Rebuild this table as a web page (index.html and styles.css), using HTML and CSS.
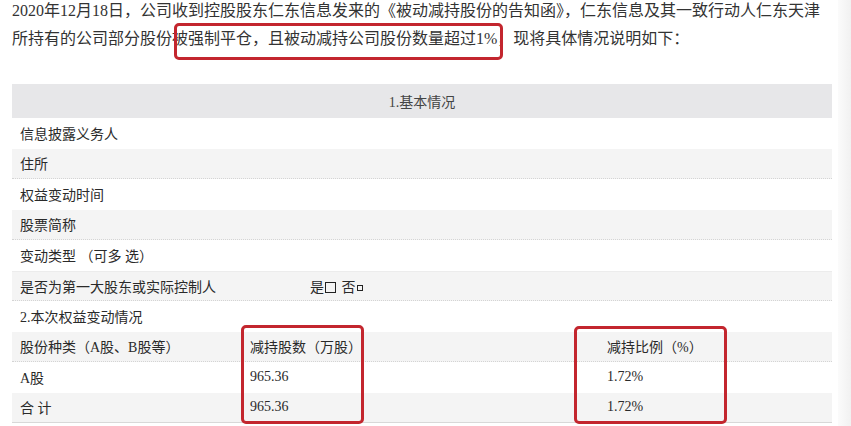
FILE: index.html
```html
<!DOCTYPE html>
<html lang="zh">
<head>
<meta charset="utf-8">
<link rel="stylesheet" href="styles.css">
</head>
<body>
<div class="page">
  <main class="content">
    <p class="intro">2020年12月18日，公司收到控股股东仁东信息发来的《被动减持股份的告知函》，仁东信息及其一致行动人仁东天津所持有的公司部分股份被强制平仓，且被动减持公司股份数量超过1%，现将具体情况说明如下：</p>
    <div class="table">
      <div class="row head"><span class="title">1.基本情况</span></div>
      <div class="row"><span class="cell">信息披露义务人</span></div>
      <div class="row"><span class="cell">住所</span></div>
      <div class="row"><span class="cell">权益变动时间</span></div>
      <div class="row"><span class="cell">股票简称</span></div>
      <div class="row"><span class="cell">变动类型 （可多 选）</span></div>
      <div class="row two"><span class="cell">是否为第一大股东或实际控制人</span><span class="cell">是<i class="box big"></i> 否<i class="box small"></i></span></div>
      <div class="row"><span class="cell">2.本次权益变动情况</span></div>
      <div class="row three"><span class="cell">股份种类（A股、B股等）</span><span class="cell">减持股数（万股）</span><span class="cell">减持比例（%）</span></div>
      <div class="row three"><span class="cell">A股</span><span class="cell">965.36</span><span class="cell">1.72%</span></div>
      <div class="row three last"><span class="cell">合 计</span><span class="cell">965.36</span><span class="cell">1.72%</span></div>
    </div>
    <div class="mark mark-text"></div>
    <div class="mark mark-shares"></div>
    <div class="mark mark-ratio"></div>
  </main>
  <aside class="strip"></aside>
</div>
</body>
</html>
```

FILE: styles.css
```css
html, body {
  margin: 0;
  padding: 0;
  background: #fff;
}
body {
  font-family: "Liberation Serif", "Noto Sans CJK SC", serif;
  color: #2a2a2a;
  overflow: hidden;
}
.page {
  display: flex;
  width: 851px;
  height: 426px;
}
.content {
  position: relative;
  width: 838px;
  padding-left: 12px;
  box-sizing: border-box;
}
.strip {
  flex: 1;
  background: linear-gradient(to right, #fbfbfb, #f1f1f1);
}
.intro {
  margin: -3px 0 0 0;
  font-size: 16px;
  line-height: 28px;
  width: 815px;
  color: #333;
}
.table {
  margin-top: 31px;
  width: 820px;
  font-size: 14px;
}
.row {
  height: 30.5px;
  display: grid;
  grid-template-columns: 1fr;
  align-items: center;
  box-sizing: border-box;
}
.row:nth-child(odd) {
  background: #f4f4f4;
  border-bottom: 1px dotted #d4d4d4;
}
.row.head {
  height: 34px;
  background: #e7e7e9;
  border-bottom: none;
  color: #444;
}
.title {
  text-align: center;
}
.row.two {
  grid-template-columns: 290px 1fr;
  border-top: 1px solid #ececec;
}
.row.three {
  grid-template-columns: 230px 357px 1fr;
}
.row.last {
  border-bottom: 1px solid #d8d8d8;
}
.cell {
  padding-left: 8px;
  white-space: nowrap;
}
.box {
  display: inline-block;
  box-sizing: border-box;
  vertical-align: middle;
  border: 1.5px solid #222;
}
.box.big {
  width: 11px;
  height: 11px;
  margin: -2px 2px 0 1px;
}
.box.small {
  width: 6px;
  height: 6px;
  border-width: 1px;
  margin: -1px 0 0 1px;
}
.mark {
  position: absolute;
  border: 3px solid #c3262e;
  border-radius: 5px;
  box-sizing: border-box;
}
.mark-text {
  left: 174px;
  top: 23px;
  width: 329px;
  height: 37px;
}
.mark-shares {
  left: 241px;
  top: 325px;
  width: 123px;
  height: 99px;
}
.mark-ratio {
  left: 574px;
  top: 326px;
  width: 153px;
  height: 98px;
}
```
